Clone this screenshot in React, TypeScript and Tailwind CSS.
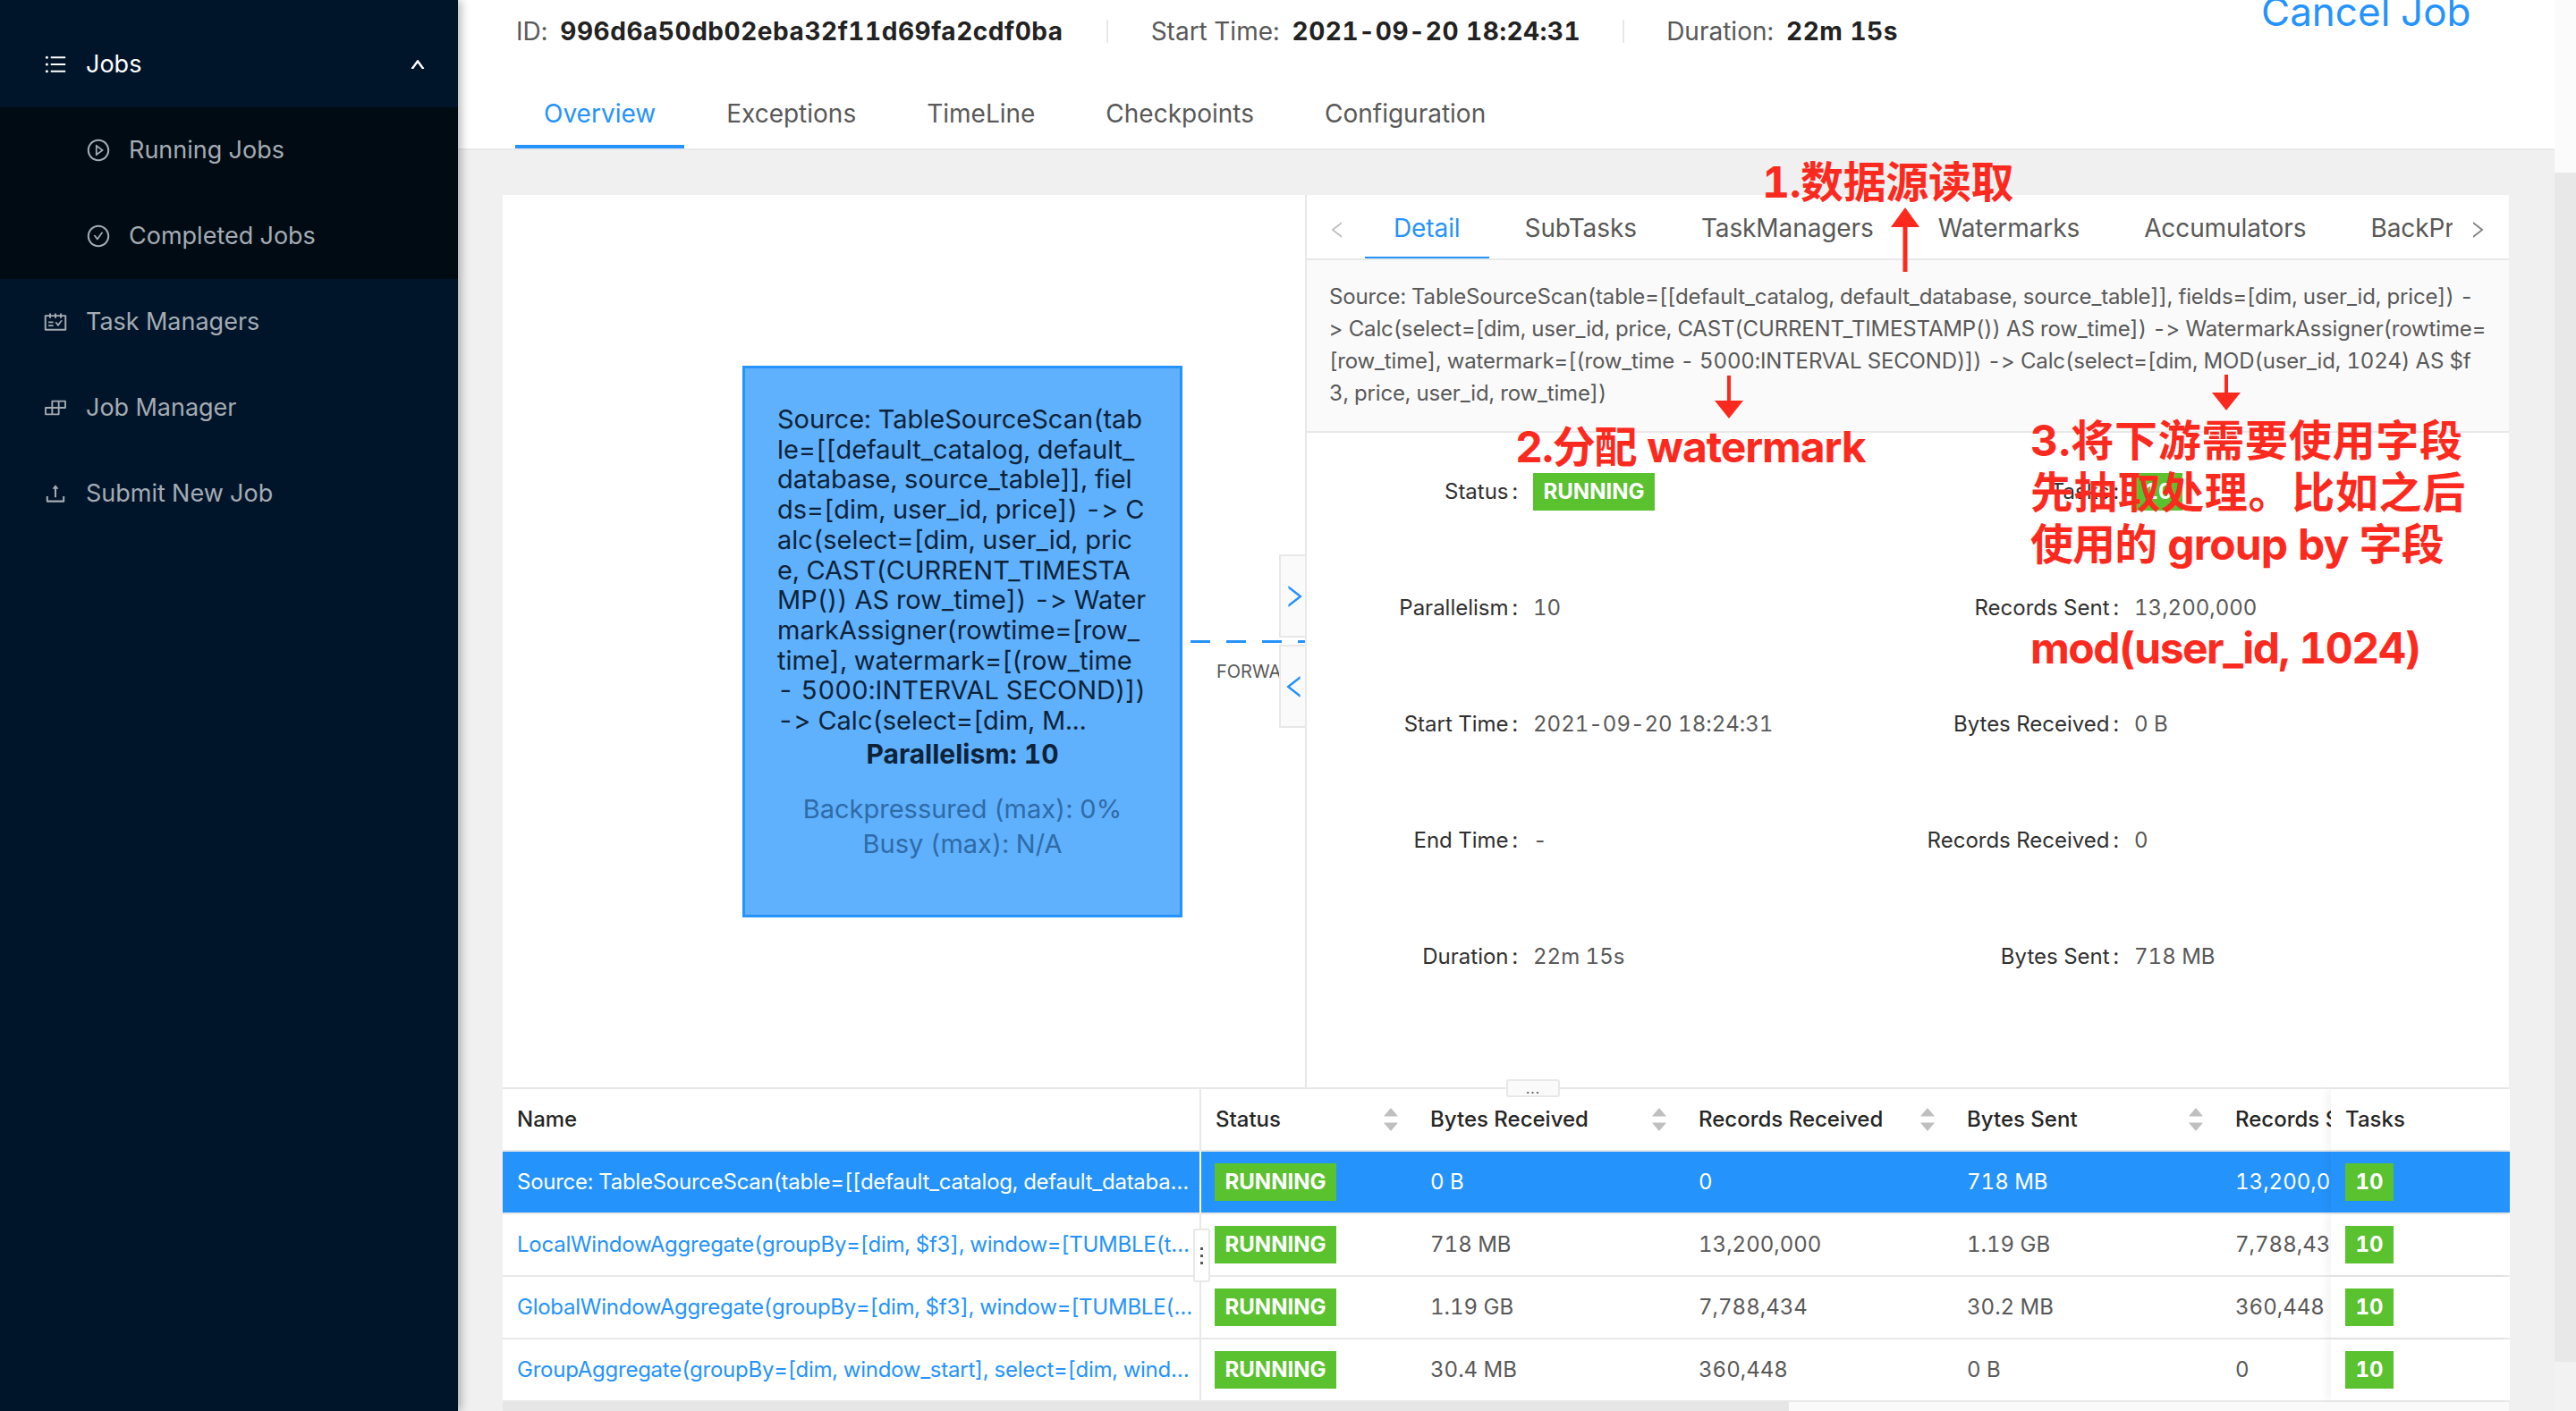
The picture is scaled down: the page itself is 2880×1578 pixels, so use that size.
import { ReactNode } from 'react'
import {
  AiFillCaretDown,
  AiFillCaretUp,
  AiOutlineBuild,
  AiOutlineCheckCircle,
  AiOutlineLeft,
  AiOutlinePlayCircle,
  AiOutlineRight,
  AiOutlineSchedule,
  AiOutlineUnorderedList,
  AiOutlineUp,
  AiOutlineUpload,
} from 'react-icons/ai'

const pageTabs = ['Overview', 'Exceptions', 'TimeLine', 'Checkpoints', 'Configuration']
const panelTabs = ['Detail', 'SubTasks', 'TaskManagers', 'Watermarks', 'Accumulators', 'BackPressure']

const descLines = [
  'Source: TableSourceScan(table=[[default_catalog, default_database, source_table]], fields=[dim, user_id, price]) -',
  '> Calc(select=[dim, user_id, price, CAST(CURRENT_TIMESTAMP()) AS row_time]) -> WatermarkAssigner(rowtime=',
  '[row_time], watermark=[(row_time - 5000:INTERVAL SECOND)]) -> Calc(select=[dim, MOD(user_id, 1024) AS $f',
  '3, price, user_id, row_time])',
]

const nodeLines = [
  'Source: TableSourceScan(tab',
  'le=[[default_catalog, default_',
  'database, source_table]], fiel',
  'ds=[dim, user_id, price]) -> C',
  'alc(select=[dim, user_id, pric',
  'e, CAST(CURRENT_TIMESTA',
  'MP()) AS row_time]) -> Water',
  'markAssigner(rowtime=[row_',
  'time], watermark=[(row_time',
  '- 5000:INTERVAL SECOND)])',
  '-> Calc(select=[dim, M...',
]

const rows = [
  {
    name: 'Source: TableSourceScan(table=[[default_catalog, default_database, source_table]], fields=[dim',
    values: ['0 B', '0', '718 MB', '13,200,000'],
  },
  {
    name: 'LocalWindowAggregate(groupBy=[dim, $f3], window=[TUMBLE(time_col=[row_time], size=[60000])',
    values: ['718 MB', '13,200,000', '1.19 GB', '7,788,434'],
  },
  {
    name: 'GlobalWindowAggregate(groupBy=[dim, $f3], window=[TUMBLE(slice_end=[$slice_end], size=[6000',
    values: ['1.19 GB', '7,788,434', '30.2 MB', '360,448'],
  },
  {
    name: 'GroupAggregate(groupBy=[dim, window_start], select=[dim, window_start, window_end, SUM(x)])',
    values: ['30.4 MB', '360,448', '0 B', '0'],
  },
]

const columns = 'grid grid-cols-[781px_240px_300px_300px_300px_123px_200px]'

function SideItem({ icon, label, indent, active }: { icon: ReactNode; label: string; indent?: boolean; active?: boolean }) {
  return (
    <div className={`flex h-24 items-center gap-5 ${indent ? 'pl-24' : 'pl-12'} ${active ? 'text-white' : 'text-[#a4abb3]'}`}>
      <span className="flex w-7 items-center justify-center text-[32px]">{icon}</span>
      <span className="text-[27px]">{label}</span>
    </div>
  )
}

function Sidebar() {
  return (
    <aside className="z-10 w-[512px] shrink-0 bg-[#00152a] shadow-[3px_0_10px_rgba(0,0,0,0.3)]">
      <div className="flex h-[120px] items-end justify-between">
        <div className="flex h-24 w-full items-center justify-between pr-[36px]">
          <SideItem icon={<AiOutlineUnorderedList />} label="Jobs" active />
          <AiOutlineUp className="text-[18px] text-white" strokeWidth={60} />
        </div>
      </div>
      <div className="bg-[#000b14]">
        <SideItem icon={<AiOutlinePlayCircle />} label="Running Jobs" indent />
        <SideItem icon={<AiOutlineCheckCircle />} label="Completed Jobs" indent />
      </div>
      <SideItem icon={<AiOutlineSchedule />} label="Task Managers" />
      <SideItem icon={<AiOutlineBuild />} label="Job Manager" />
      <SideItem icon={<AiOutlineUpload />} label="Submit New Job" />
    </aside>
  )
}

function HeaderStat({ label, value }: { label: string; value: string }) {
  return (
    <div className="flex items-center gap-[14px] text-[28px] leading-none">
      <span className="text-[#595959]">{label}</span>
      <span className="font-bold tracking-[0.55px] text-[#222]">{value}</span>
    </div>
  )
}

function Header() {
  return (
    <header className="relative h-[168px] border-b-2 border-[#e8e8e8] bg-white">
      <div className="flex h-[70px] items-center pl-[65px]">
        <HeaderStat label="ID:" value="996d6a50db02eba32f11d69fa2cdf0ba" />
        <span className="mx-[48px] h-[26px] w-0.5 bg-[#e8e8e8]" />
        <HeaderStat label="Start Time:" value="2021-09-20 18:24:31" />
        <span className="mx-[47px] h-[26px] w-0.5 bg-[#e8e8e8]" />
        <HeaderStat label="Duration:" value="22m 15s" />
      </div>
      <span className="absolute left-[2016px] top-[-14px] text-[44px] leading-[54px] text-[#2593fc]">Cancel Job</span>
      <nav className="flex pl-16">
        {pageTabs.map((tab, i) => (
          <div
            key={tab}
            className={`mr-[15px] flex h-[96px] items-center border-b-4 px-8 pt-[22px] text-[28px] ${
              i === 0 ? 'border-[#2593fc] text-[#2593fc]' : 'border-transparent text-[#595959]'
            }`}
          >
            {tab}
          </div>
        ))}
      </nav>
    </header>
  )
}

function GraphArea() {
  return (
    <div className="relative w-[899px] shrink-0 overflow-hidden border-r-2 border-[#e8e8e8]">
      {/* node */}
      <div className="absolute left-[268px] top-[191px] flex h-[617px] w-[492px] flex-col border-[3px] border-[#2593fc] bg-[#5fb0fd] pt-[40px] text-center">
        <div className="pl-[36px] text-left text-[29px] leading-[33.7px] text-[#0e2338]">
          {nodeLines.map((line) => (
            <div key={line} className="whitespace-nowrap">{line}</div>
          ))}
        </div>
        <div className="text-[30px] font-bold leading-[40px] text-[#0e2338]">Parallelism: 10</div>
        <div className="mt-[22px] text-[29px] leading-[39px] text-[#2f6ba6]">Backpressured (max): 0%</div>
        <div className="text-[29px] leading-[39px] text-[#2f6ba6]">Busy (max): N/A</div>
      </div>
      {/* edge */}
      <div className="absolute left-[769px] top-[498px] h-[3px] w-[130px] bg-[repeating-linear-gradient(90deg,#2593fc_0,#2593fc_22px,transparent_22px,transparent_40px)]" />
      <span className="absolute left-[798px] top-[521px] text-[20px] leading-[24px] text-[#595959]">FORWARD</span>
      <div className="absolute left-[868px] top-[402px] flex h-[93px] w-[31px] items-center justify-center border-2 border-r-0 border-[#e8e8e8] bg-[#fafafa] text-[#2593fc]">
        <AiOutlineRight className="shrink-0 text-[32px]" />
      </div>
      <div className="absolute left-[868px] top-[503px] flex h-[93px] w-[31px] items-center justify-center border-2 border-r-0 border-[#e8e8e8] bg-[#fafafa] text-[#2593fc]">
        <AiOutlineLeft className="shrink-0 text-[32px]" />
      </div>
    </div>
  )
}

function DetailItem({ label, children }: { label: string; children: ReactNode }) {
  return (
    <div className="flex h-[130px] items-center text-[24px]">
      <span className="w-[236px] shrink-0 text-right text-[#303030]">{label}<span className="ml-[4px]">:</span></span>
      <span className="ml-[17px] text-[#595959]">{children}</span>
    </div>
  )
}

function Badge({ children, wide }: { children: ReactNode; wide?: boolean }) {
  return (
    <span className={`flex h-[42px] items-center justify-center bg-[#5ac12f] text-[24px] font-bold leading-none text-white ${wide ? 'w-[136px]' : 'w-[54px]'}`}>
      {children}
    </span>
  )
}

function DetailPanel() {
  return (
    <div className="flex min-w-0 flex-1 flex-col">
      <div className="relative flex h-[73px] border-b-2 border-[#e8e8e8] pl-[65px]">
        <AiOutlineLeft className="absolute left-[22px] top-[27px] text-[24px] text-[#bfbfbf]" />
        <div className="flex w-[1216px] overflow-hidden">
          {panelTabs.map((tab, i) => (
            <div
              key={tab}
              className={`mr-2 flex h-[73px] shrink-0 items-center border-b-4 px-8 pt-1 text-[28px] tracking-[-0.1px] ${
                i === 0 ? 'border-[#2593fc] text-[#2593fc]' : 'border-transparent text-[#595959]'
              }`}
            >
              {tab}
            </div>
          ))}
        </div>
        <AiOutlineRight className="absolute left-[1297px] top-[27px] text-[24px] text-[#7f7f7f]" />
      </div>
      <div className="h-[193px] border-b-2 border-[#e8e8e8] bg-[#fafafa] pl-[25px] pt-[23px] text-[24px] leading-[36px] tracking-[-0.15px] text-[#595959]">
        {descLines.map((line) => (
          <div key={line} className="whitespace-nowrap">{line}</div>
        ))}
      </div>
      <div className="grid grid-cols-2 pt-[1px]">
        <DetailItem label="Status"><Badge wide>RUNNING</Badge></DetailItem>
        <DetailItem label="Tasks"><Badge>10</Badge></DetailItem>
        <DetailItem label="Parallelism">10</DetailItem>
        <DetailItem label="Records Sent">13,200,000</DetailItem>
        <DetailItem label="Start Time">2021-09-20 18:24:31</DetailItem>
        <DetailItem label="Bytes Received">0 B</DetailItem>
        <DetailItem label="End Time">-</DetailItem>
        <DetailItem label="Records Received">0</DetailItem>
        <DetailItem label="Duration">22m 15s</DetailItem>
        <DetailItem label="Bytes Sent">718 MB</DetailItem>
      </div>
    </div>
  )
}

function SortHead({ label, clip }: { label: string; clip?: boolean }) {
  return (
    <div className="flex items-center justify-between overflow-hidden pl-4 pr-[17px] font-medium">
      <span className="whitespace-nowrap">{label}</span>
      {!clip && (
        <span className="flex flex-col text-[22px] leading-none text-[#bfbfbf]">
          <AiFillCaretUp className="-mb-[3px]" />
          <AiFillCaretDown className="-mt-[3px]" />
        </span>
      )}
    </div>
  )
}

function VertexTable() {
  return (
    <div className="relative text-[24px]">
      <div className={`${columns} h-[70px] border-b-2 border-[#e8e8e8] text-[#262626]`}>
        <div className="flex items-center border-r-2 border-[#e8e8e8] pl-4 font-medium">Name</div>
        <SortHead label="Status" />
        <SortHead label="Bytes Received" />
        <SortHead label="Records Received" />
        <SortHead label="Bytes Sent" />
        <SortHead label="Records Sent" clip />
        <div className="flex items-center bg-white pl-4 font-medium shadow-[-6px_0_8px_rgba(0,0,0,0.04)]">Tasks</div>
      </div>
      {rows.map((row, i) => (
        <div key={row.name} className={`${columns} h-[70px] border-b-2 border-[#e8e8e8] ${i === 0 ? 'bg-[#2593fc] text-white' : 'text-[#595959]'} ${i === 3 ? 'border-b-0 h-[68px]' : ''}`}>
          <div className={`flex items-center overflow-hidden border-r-2 pl-4 pr-[7px] ${i === 0 ? 'border-white text-white' : 'border-[#e8e8e8] text-[#2593fc]'}`}>
            <span className="truncate tracking-[-0.25px]">{row.name}</span>
          </div>
          <div className="flex items-center pl-[15px]"><Badge wide>RUNNING</Badge></div>
          {row.values.map((value, j) => (
            <div key={j} className="flex items-center overflow-hidden whitespace-nowrap pl-4">{value}</div>
          ))}
          <div className="flex items-center bg-white pl-4 shadow-[-6px_0_8px_rgba(0,0,0,0.04)]" style={i === 0 ? { background: '#2593fc' } : undefined}>
            <Badge>10</Badge>
          </div>
        </div>
      ))}
      {/* resize handles */}
      <div className="absolute left-[1122px] top-[-11px] flex h-5 w-[60px] items-center justify-center rounded-[3px] border-2 border-[#e8e8e8] bg-[#fafafa] text-[16px] leading-none tracking-[1px] text-[#595959]">
        ...
      </div>
      <div className="absolute left-[772px] top-[156px] flex h-[60px] w-[19px] flex-col items-center justify-center gap-[5px] rounded-[3px] border-2 border-[#e8e8e8] bg-white">
        <span className="h-[3px] w-[3px] bg-[#595959]" />
        <span className="h-[3px] w-[3px] bg-[#595959]" />
        <span className="h-[3px] w-[3px] bg-[#595959]" />
      </div>
    </div>
  )
}

function Annotations() {
  const text = 'absolute whitespace-nowrap font-bold text-[#fc2a1e]'
  return (
    <>
      <span className={`${text} left-[1970px] top-[174px] text-[48px] leading-[60px] tracking-[-0.4px]`}>1.数据源读取</span>
      <svg className="absolute left-[2114px] top-[230px]" width="32" height="74" viewBox="0 0 32 74">
        <path d="M16 2L32 24H18.5V74H13.5V24H0Z" fill="#fc2a1e" />
      </svg>
      <svg className="absolute left-[1917px] top-[420px]" width="32" height="48" viewBox="0 0 32 48">
        <path d="M14 0H18V28H32L16 48L0 28H14Z" fill="#fc2a1e" />
      </svg>
      <svg className="absolute left-[2473px] top-[419px]" width="32" height="40" viewBox="0 0 32 40">
        <path d="M14 0H18V20H32L16 40L0 20H14Z" fill="#fc2a1e" />
      </svg>
      <span className={`${text} left-[1694px] top-[470px] text-[48px] leading-[60px] tracking-[-1.1px]`}>2.分配 watermark</span>
      <div className={`${text} left-[2270px] top-[464px] text-[48px] leading-[58px]`}>
        <div className="tracking-[0.7px]">3.将下游需要使用字段</div>
        <div className="tracking-[0.7px]">先抽取处理。比如之后</div>
        <div className="tracking-[-0.9px]">使用的 group by 字段</div>
      </div>
      <span className={`${text} left-[2270px] top-[695px] text-[48px] leading-[60px] tracking-[-1.5px]`}>mod(user_id, 1024)</span>
    </>
  )
}

export default function App() {
  return (
    <div className="relative flex h-[1578px] w-[2880px] overflow-hidden bg-[#f0f0f0] font-['Inter','Noto_Sans_CJK_SC',sans-serif] tabular-nums [font-feature-settings:'calt'_0,'tnum'_1]">
      <Sidebar />
      <main className="flex min-w-0 flex-1 flex-col">
        <Header />
        <div className="flex-1 pl-[50px] pr-[51px] pt-[50px]">
          <div className="flex h-[1360px] flex-col bg-white">
            <div className="flex h-[1000px] shrink-0 border-b-2 border-[#e8e8e8]">
              <GraphArea />
              <DetailPanel />
            </div>
            <VertexTable />
            <div className="flex h-3 bg-[#fafafa]">
              <div className="w-[1438px] bg-[#e6e6e6]" />
            </div>
          </div>
        </div>
      </main>
      <div className="flex w-6 shrink-0 flex-col">
        <div className="h-[193px] bg-[#fbfbfb]" />
        <div className="flex-1 bg-[#e8e8e8]" />
        <div className="h-[55px] bg-[#f2f2f2]" />
      </div>
      <Annotations />
    </div>
  )
}
